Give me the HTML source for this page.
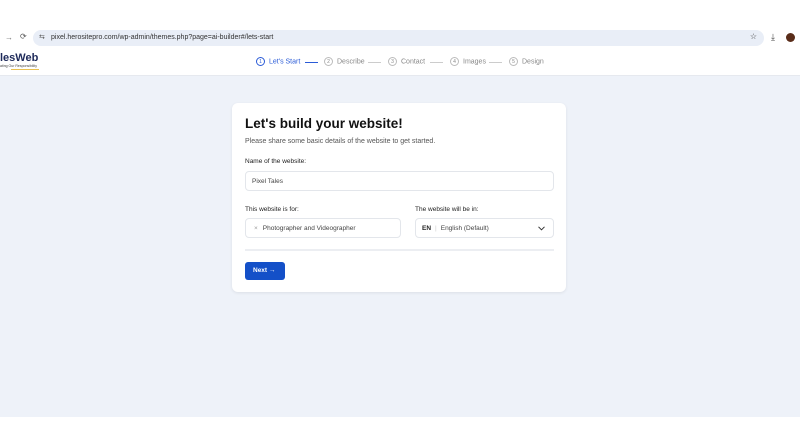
<!DOCTYPE html>
<html><head><style>
*{box-sizing:border-box;margin:0;padding:0}
body{width:800px;height:445px;background:#fff;font-family:"Liberation Sans",sans-serif;position:relative;overflow:hidden;color:#111}
.abs{position:absolute}
.addr{left:33px;top:30px;width:731px;height:16px;background:#e9eef7;border-radius:8px;font-size:7px;color:#333;padding:4px 0 0 18px}
.hdr{left:0;top:48px;width:800px;height:28px;background:#fff;border-bottom:1px solid #e6e9ef}
.main{left:0;top:76px;width:800px;height:341px;background:#eef2f9}
.card{left:232px;top:103px;width:334px;height:189px;background:#fff;border-radius:6px;box-shadow:0 1px 3px rgba(0,0,0,.08)}
.step{font-size:7px;color:#888;top:57px}
.num{display:inline-block;width:9px;height:9px;border:1px solid #bbb;border-radius:50%;font-size:5px;text-align:center;line-height:8px;margin-right:4px;vertical-align:middle}
.line{height:1px;background:#ccc;top:62px}
.lbl{font-size:6.5px;color:#222}
.inp{border:1px solid #e3e6eb;border-radius:4px;background:#fff;font-size:6.5px;color:#444;padding-left:6px;display:flex;align-items:center}
</style></head><body>
<div class="abs" style="left:5px;top:33px;font-size:8px;color:#777">→</div>
<div class="abs" style="left:20px;top:32px;font-size:8px;color:#555">⟳</div>
<div class="abs addr"><span style="position:absolute;left:6px;top:3px;font-size:7px;color:#555">⇆</span>pixel.herositepro.com/wp-admin/themes.php?page=ai-builder#/lets-start<span style="position:absolute;right:7px;top:2px;font-size:8px">☆</span></div>
<div class="abs" style="left:771px;top:32px;font-size:9px;color:#444">⤓</div>
<div class="abs" style="left:786px;top:33px;width:9px;height:9px;border-radius:50%;background:#5a2d1a"></div>
<div class="abs hdr"></div>
<div class="abs" style="left:0;top:52px;font-size:11px;font-weight:bold;color:#1e2a5a">lesWeb</div>
<div class="abs" style="left:0;top:64px;font-size:3.5px;color:#444">ating Our Responsibility</div>
<div class="abs" style="left:11px;top:69px;width:28px;height:1px;background:#e8c050"></div>
<div class="abs step" style="left:256px;color:#2a5bd7"><span class="num" style="border-color:#2a5bd7;color:#2a5bd7">1</span>Let's Start</div>
<div class="abs line" style="left:305px;width:13px;background:#2a5bd7"></div>
<div class="abs step" style="left:324px"><span class="num">2</span>Describe</div>
<div class="abs line" style="left:368px;width:13px"></div>
<div class="abs step" style="left:388px"><span class="num">3</span>Contact</div>
<div class="abs line" style="left:430px;width:13px"></div>
<div class="abs step" style="left:450px"><span class="num">4</span>Images</div>
<div class="abs line" style="left:489px;width:13px"></div>
<div class="abs step" style="left:509px"><span class="num">5</span>Design</div>
<div class="abs main"></div>
<div class="abs card"></div>
<div class="abs" style="left:245px;top:116px;font-size:13.5px;font-weight:bold;color:#111">Let's build your website!</div>
<div class="abs" style="left:245px;top:138px;font-size:7px;color:#555">Please share some basic details of the website to get started.</div>
<div class="abs lbl" style="left:245px;top:158px">Name of the website:</div>
<div class="abs inp" style="left:245px;top:171px;width:309px;height:20px">Pixel Tales</div>
<div class="abs lbl" style="left:245px;top:206px">This website is for:</div>
<div class="abs inp" style="left:245px;top:218px;width:156px;height:20px"><span style="color:#999;margin:0 5px 0 2px">×</span>Photographer and Videographer</div>
<div class="abs lbl" style="left:415px;top:206px">The website will be in:</div>
<div class="abs inp" style="left:415px;top:218px;width:139px;height:20px"><b style="color:#222">EN</b><span style="color:#ccc;margin:0 4px">|</span>English (Default)<svg style="position:absolute;right:8px;top:7px" width="7" height="5" viewBox="0 0 7 5"><path d="M0.5 0.8 L3.5 3.8 L6.5 0.8" fill="none" stroke="#333" stroke-width="1"/></svg></div>
<div class="abs" style="left:245px;top:249px;width:309px;height:2px;background:#eceef2"></div>
<div class="abs" style="left:245px;top:262px;width:40px;height:18px;background:#1450c8;border-radius:3px;color:#fff;font-size:6.5px;font-weight:bold;padding:5px 0 0 8px">Next →</div>
</body></html>
